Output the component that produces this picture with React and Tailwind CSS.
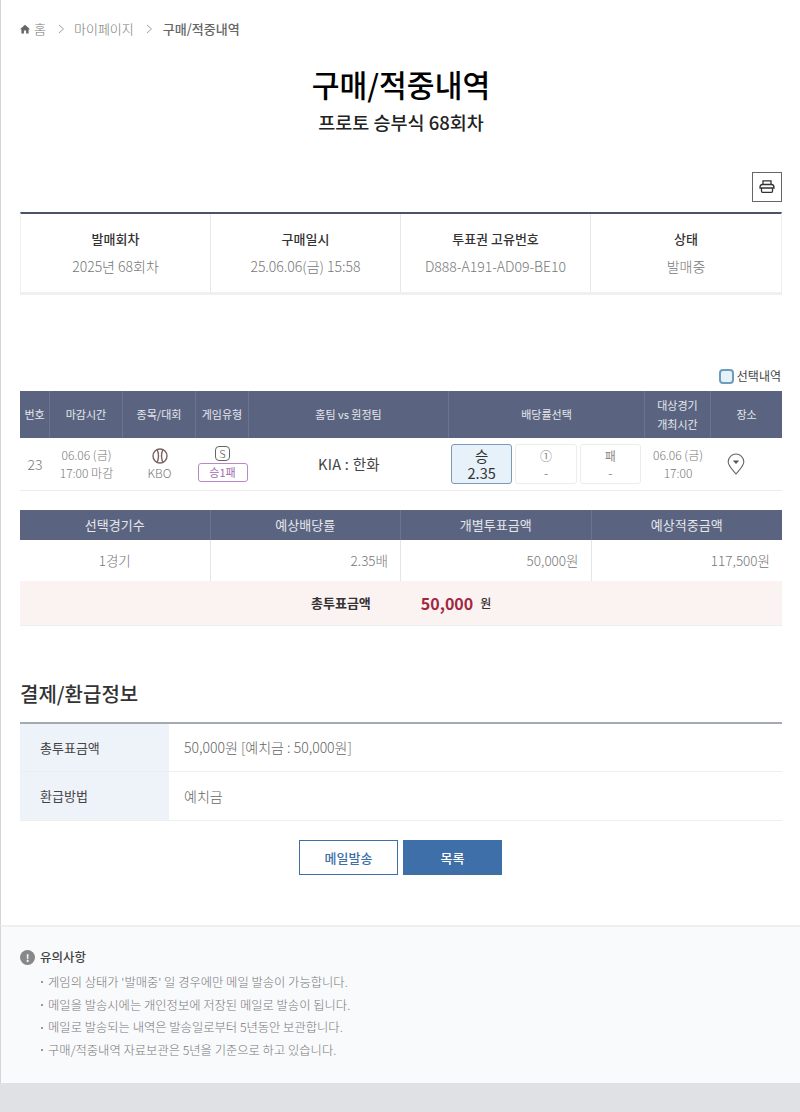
import React from 'react';

const infoCols = [
  { title: '발매회차', value: '2025년 68회차' },
  { title: '구매일시', value: '25.06.06(금) 15:58' },
  { title: '투표권 고유번호', value: 'D888-A191-AD09-BE10' },
  { title: '상태', value: '발매중' },
];

const notices = [
  "게임의 상태가 '발매중' 일 경우에만 메일 발송이 가능합니다.",
  '메일을 발송시에는 개인정보에 저장된 메일로 발송이 됩니다.',
  '메일로 발송되는 내역은 발송일로부터 5년동안 보관합니다.',
  '구매/적중내역 자료보관은 5년을 기준으로 하고 있습니다.',
];

function Chevron() {
  return (
    <svg width="7" height="10" viewBox="0 0 7 10" fill="none" stroke="#9ca3af" strokeWidth="1">
      <path d="M1 1l4.5 4L1 9" />
    </svg>
  );
}

function HeadCell({ children, className = '' }) {
  return (
    <div className={`flex items-center justify-center text-center border-r border-[#6b7592] last:border-r-0 ${className}`}>
      {children}
    </div>
  );
}

function OddsButton({ top, bottom, active }) {
  return (
    <div
      className={
        active
          ? 'flex-1 h-[40px] rounded-[3px] border border-[#7c9ab5] bg-[#e6f1fa] text-[#333] flex flex-col items-center justify-center text-[14.500px] leading-[17px]'
          : 'flex-1 h-[40px] rounded-[3px] border border-[#ececec] bg-white text-[#888] flex flex-col items-center justify-center text-[12px] leading-[17px]'
      }
    >
      <span>{top}</span>
      <span>{bottom}</span>
    </div>
  );
}

export default function App() {
  return (
    <div
      className="min-h-[1112px] bg-[#dfe1e5] text-[#666]"
      style={{ fontFamily: '"Noto Sans CJK KR", "Noto Sans", sans-serif' }}
    >
      <div className="bg-white border-l border-[#d5d5d5] pl-[19px] pr-[18px] h-[925px] flex flex-col">
        {/* breadcrumb */}
        <div className="h-[18px] mt-[20px] flex items-center text-[13px] font-light text-[#777]">
          <svg width="10" height="10" viewBox="0 0 10 10" fill="#666">
            <path d="M5 .8L0 5.3h1.4V9.500h2.500V6.400h2.200v3.100h2.500V5.300H10z" />
          </svg>
          <span className="ml-[4px]">홈</span>
          <span className="ml-[12px] mr-[9px]"><Chevron /></span>
          <span>마이페이지</span>
          <span className="ml-[12px] mr-[10px]"><Chevron /></span>
          <span className="text-[#666] font-medium">구매/적중내역</span>
        </div>

        {/* title */}
        <h1 className="mt-[24px] text-center text-[30.200px] leading-[44px] font-medium text-black">구매/적중내역</h1>
        <p className="mt-[3px] text-center text-[18.500px] leading-[26px] font-medium text-[#222]">프로토 승부식 68회차</p>

        <div className="mt-[37px] flex justify-end">
          <div className="w-[30px] h-[30px] border border-[#666] flex items-center justify-center">
            <svg width="16" height="16" viewBox="0 0 16 16" fill="none" stroke="#333" strokeWidth="1.300">
              <path d="M4 5V1.800h8V5" />
              <path d="M1 8.500c0-2 1-3 2.500-3h9c1.500 0 2.500 1 2.500 3V9H1z" />
              <path d="M2.500 9v3.200c0 .7.500 1.100 1 1.100h9c.500 0 1-.4 1-1.100V9" />
            </svg>
          </div>
        </div>

        {/* purchase info */}
        <div className="mt-[10px] border-t-2 border-[#4a5465] border-b-[3px] border-b-[#f0f0f0] border-r border-r-[#efefef] border-l border-l-[#efefef] grid grid-cols-4 h-[83px]">
          {infoCols.map((col) => (
            <div key={col.title} className="flex flex-col items-center pt-[15px] border-r border-[#e8e8e8] last:border-r-0">
              <span className="text-[13px] leading-[20px] font-medium text-[#333]">{col.title}</span>
              <span className="mt-[7px] text-[14px] leading-[20px] font-light text-[#777]">{col.value}</span>
            </div>
          ))}
        </div>

        <div className="mt-[72px] h-[18px] pr-[1px] flex items-center justify-end text-[12px] text-[#444]">
          <span className="w-[15px] h-[15px] rounded-[4px] border-2 border-[#6b9dbd] bg-[#e6f1fa] mr-[3px]" />
          <span>선택내역</span>
        </div>

        {/* match table */}
        <div className="mt-[6px] h-[47px] bg-[#5a6480] text-white/85 text-[11px] leading-[19px] grid grid-cols-[30px_73px_73px_53px_200px_196px_66px_1fr]">
          <HeadCell>번호</HeadCell>
          <HeadCell>마감시간</HeadCell>
          <HeadCell>종목/대회</HeadCell>
          <HeadCell>게임유형</HeadCell>
          <HeadCell>홈팀 vs 원정팀</HeadCell>
          <HeadCell>배당률선택</HeadCell>
          <HeadCell>대상경기<br />개최시간</HeadCell>
          <HeadCell>장소</HeadCell>
        </div>
        <div className="h-[53px] border-b border-[#ececec] grid grid-cols-[30px_73px_73px_53px_200px_196px_66px_1fr] items-center text-center text-[12px] font-light text-[#777]">
          <div className="text-[14px]">23</div>
          <div className="leading-[18px]">06.06 (금)<br />17:00 마감</div>
          <div className="flex flex-col items-center">
            <svg width="16" height="16" viewBox="0 0 16 16" fill="none" stroke="#7a6060" strokeWidth="1.400">
              <circle cx="8" cy="8" r="7" />
              <path d="M5.200 1.800c1.600 3.800 1.600 8.600 0 12.400M10.800 1.800c-1.600 3.800-1.600 8.600 0 12.400" />
            </svg>
            <span className="leading-[16px] mt-[1px]">KBO</span>
          </div>
          <div className="flex flex-col items-center">
            <span className="w-[15px] h-[15px] rounded-[4px] border border-[#666] text-[11px] leading-[13px] text-[#555]">S</span>
            <span className="mt-[2px] w-[50px] h-[19px] rounded-[3px] border border-[#b889c4] text-[#a06cb0] text-[11px] leading-[17px] font-normal">승1패</span>
          </div>
          <div className="text-[14.500px] font-normal tracking-[0.3px] text-[#444]">KIA : 한화</div>
          <div className="flex gap-[3px] pl-[2px] pr-[4px] font-normal">
            <OddsButton top="승" bottom="2.35" active />
            <OddsButton top="①" bottom="-" />
            <OddsButton top="패" bottom="-" />
          </div>
          <div className="leading-[18px]">06.06 (금)<br />17:00</div>
          <div className="flex justify-center pr-[22px]">
            <svg width="18" height="22" viewBox="0 0 18 22" fill="none" stroke="#666" strokeWidth="1.100">
              <path d="M9 21C5 16 1.200 13 1.200 8.800a7.800 7.800 0 0 1 15.600 0C16.800 13 13 16 9 21z" />
              <path d="M5.800 7.500h6.400L9 11z" fill="#555" stroke="none" />
            </svg>
          </div>
        </div>

        {/* summary */}
        <div className="mt-[19px] h-[30px] bg-[#5a6480] text-white/85 text-[13px] grid grid-cols-4">
          {['선택경기수', '예상배당률', '개별투표금액', '예상적중금액'].map((t) => (
            <HeadCell key={t}>{t}</HeadCell>
          ))}
        </div>
        <div className="h-[41px] grid grid-cols-4 text-[13.500px] font-light text-[#777] items-stretch">
          <div className="flex items-center justify-center border-r border-[#e5e5e5]">1경기</div>
          <div className="flex items-center justify-end pr-[12px] border-r border-[#e5e5e5]">2.35배</div>
          <div className="flex items-center justify-end pr-[12px] border-r border-[#e5e5e5]">50,000원</div>
          <div className="flex items-center justify-end pr-[12px]">117,500원</div>
        </div>
        <div className="h-[45px] bg-[#fbf2f2] border-b border-[#eee] flex items-center">
          <span className="ml-[291px] text-[13px] font-bold text-[#333]">총투표금액</span>
          <span className="ml-[50px] text-[16px] font-bold text-[#a3263f]">50,000</span>
          <span className="ml-[7px] text-[12px] font-medium text-[#333]">원</span>
        </div>

        {/* payment */}
        <h2 className="mt-[51px] text-[20px] leading-[34px] font-medium text-[#333]">결제/환급정보</h2>
        <div className="mt-[11px] border-t-2 border-[#a5a9b0] text-[13px]">
          <div className="h-[48px] flex border-b border-[#eee]">
            <div className="w-[149px] bg-[#eef2f9] text-[#444] flex items-center pl-[20px]">총투표금액</div>
            <div className="flex items-center pl-[15px] text-[14px] font-light text-[#666]">50,000원 [예치금 : 50,000원]</div>
          </div>
          <div className="h-[49px] flex border-b border-[#eee]">
            <div className="w-[149px] bg-[#eef2f9] text-[#444] flex items-center pl-[20px]">환급방법</div>
            <div className="flex items-center pl-[15px] text-[14px] font-light text-[#666]">예치금</div>
          </div>
        </div>

        <div className="mt-[19px] flex justify-center gap-[5px] pr-[1px]">
          <div className="w-[99px] h-[35px] border border-[#3f6fa8] text-[#3f6fa8] text-[13px] font-medium flex items-center justify-center">메일발송</div>
          <div className="w-[99px] h-[35px] bg-[#3f6fa8] text-white text-[13px] font-medium flex items-center justify-center">목록</div>
        </div>
      </div>

      {/* notice */}
      <div className="h-[158px] bg-[#f9fafc] border-l border-[#d5d5d5] border-t-2 border-t-[#eeeff1] pl-[19px] pt-[20px]">
        <div className="flex items-center h-[20px] text-[12.500px] font-medium text-[#444]">
          <span className="w-[15px] h-[15px] rounded-full bg-[#888] text-white text-[10px] font-bold leading-[15px] text-center mr-[5px]">!</span>
          유의사항
        </div>
        <ul className="mt-[4px] pl-[21px] text-[12.300px] leading-[22.700px] font-light text-[#777]">
          {notices.map((n) => (
            <li key={n} className="flex items-center">
              <span className="w-[2px] h-[2px] rounded-full bg-[#777] mr-[5px]" />
              {n}
            </li>
          ))}
        </ul>
      </div>
    </div>
  );
}
